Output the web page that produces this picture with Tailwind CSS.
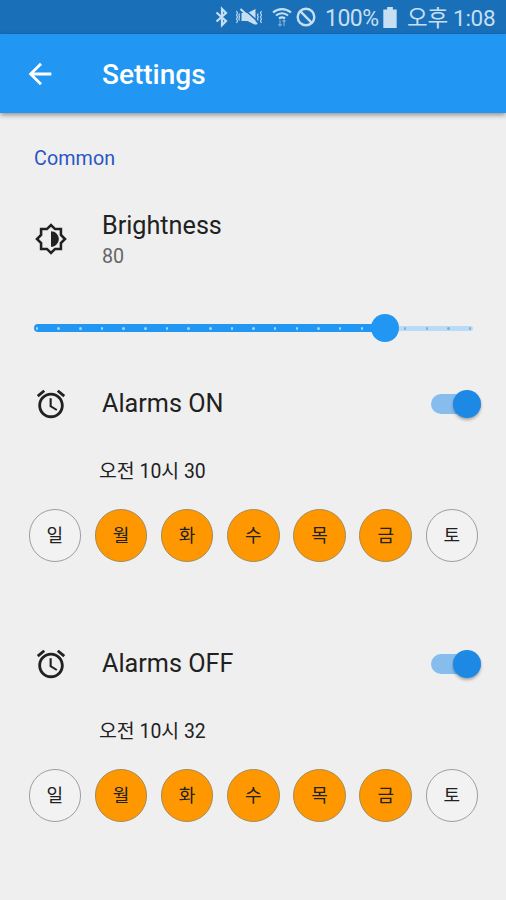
<!DOCTYPE html>
<html lang="ko">
<head>
  <meta charset="UTF-8" />
  <meta name="viewport" content="width=device-width, initial-scale=1.0"/>
  <title>Settings</title>
  <script src="https://cdn.jsdelivr.net/npm/@tailwindcss/browser@4"></script>
</head>
<body class="bg-[#efefef] font-[Roboto,'Noto_Sans_CJK_KR',sans-serif] text-[#212121]">
  <div class="w-[506px] h-[900px] overflow-hidden">
    <!-- status bar -->
    <div class="h-[34px] bg-[#1a6fb9] text-[#c6dff3] flex items-center pl-[214px] whitespace-nowrap">
      <svg class="w-4 h-[22px] shrink-0" viewBox="0 0 16 22" fill="none" stroke="currentColor" stroke-width="2.200"><path d="M2.500 6.500l9.500 8.500-4 4v-16l4 4-9.500 8.500"/></svg>
      <svg class="w-[28px] h-[20px] shrink-0 ml-[5px]" viewBox="0 0 28 20" fill="currentColor">
        <path d="M6.500 6h6L20.500 2v16l-8-4h-6z"/>
        <path d="M7.500 1l16 14" stroke="#1a6fb9" stroke-width="1.500"/>
        <path d="M5.500 2l16.500 15" stroke="currentColor" stroke-width="2"/>
        <path d="M1.500 4l1 2-1 2 1 2-1 2 1 2-1 2M4.500 6.500l-.7 1.700.7 1.800-.7 1.800.7 1.700M26.500 4l-1 2 1 2-1 2 1 2-1 2 1 2M23.200 6.500l-.7 1.700.7 1.800-.7 1.800.7 1.700" fill="none" stroke="currentColor" stroke-width="1.100"/>
      </svg>
      <svg class="w-[20px] h-[20px] shrink-0 ml-[9px]" viewBox="0 0 20 20" fill="none" stroke="currentColor" stroke-width="2.200">
        <path d="M1 5.500c5.500-4.500 12.500-4.500 18 0M4 8.500c3.500-3 8.500-3 12 0M7 11.500c2-1.500 4-1.500 6 0"/>
        <path d="M8 13v6M6.300 17.200L8 19l1.700-1.800M12 19v-6M10.500 14.500L12 13l1.500 1.500" stroke-width="1.200" opacity=".55"/>
      </svg>
      <svg class="w-[20px] h-[20px] shrink-0 ml-1" viewBox="0 0 20 20" fill="none" stroke="currentColor" stroke-width="2.400"><circle cx="10" cy="10" r="8.300"/><path d="M4.200 4.200l11.600 11.600"/></svg>
      <span class="ml-[9px] w-[55px] text-[23px] tracking-[-0.5px] leading-[34px] pt-[3px]">100%</span>
      <svg class="w-[14px] h-[21px] shrink-0 ml-[3px]" viewBox="0 0 14 22" fill="currentColor"><path d="M4 0h6v2.500h4V22H0V2.500h4z"/></svg>
      <span class="ml-[10px] text-[22.500px] leading-[34px] pt-px tracking-[-0.300px]">오후 1:08</span>
    </div>

    <!-- app bar -->
    <header class="relative h-[79px] bg-[#2196f3] text-white flex items-center pl-[23px] shadow-[0_2px_5px_rgba(0,0,0,0.4)]">
      <svg class="w-[34px] h-[34px]" viewBox="0 0 24 24" fill="currentColor"><path d="M20 11H7.830l5.590-5.590L12 4l-8 8 8 8 1.410-1.410L7.830 13H20v-2z"/></svg>
      <h1 class="ml-[45px] pt-[2px] text-[28px] font-medium">Settings</h1>
    </header>

    <main>
      <div class="h-[90px] pl-[34px] pt-[2px] flex items-center text-[19.700px] tracking-[0.100px] text-[#2a56c6]">Common</div>

      <div class="h-[72px] pl-[34px] flex items-center">
        <svg class="w-[34px] h-[34px]" viewBox="0 0 24 24">
          <path d="M19 9.100V5h-4.100L12 2.100 9.100 5H5v4.100L2.100 12 5 14.900V19h4.100l2.900 2.900 2.900-2.900H19v-4.100l2.900-2.900z" fill="none" stroke="#212121" stroke-width="1.800"/>
          <path d="M12 6.500v11c3 0 5.500-2.500 5.500-5.500S15 6.500 12 6.500z" fill="#212121"/>
        </svg>
        <div class="ml-[34px] pt-[2px]">
          <div class="text-[25.200px] leading-[33px]">Brightness</div>
          <div class="text-[19.700px] leading-[29px] text-[#666]">80</div>
        </div>
      </div>

      <div class="relative h-[86px] mx-[34px]">
        <div class="absolute left-0 top-[50.500px] w-[439px] h-[5px] rounded-full bg-[#bbdbf5]"></div>
        <div class="absolute left-0 top-[49px] w-[351px] h-[8px] rounded-full bg-[#2196f3]"></div>
        <div id="ticks"></div>
        <div class="absolute left-[337px] top-[39px] w-[28px] h-[28px] rounded-full bg-[#2196f3]"></div>
      </div>

      <div id="alarms"></div>
    </main>
  </div>

  <script>
    const days = ["일", "월", "화", "수", "목", "금", "토"];
    const alarms = [
      { title: "Alarms ON", time: "오전 10시 30", active: [1, 2, 3, 4, 5] },
      { title: "Alarms OFF", time: "오전 10시 32", active: [1, 2, 3, 4, 5] }
    ];
    const brightness = 80;

    function renderTicks() {
      let html = "";
      for (let i = 0; i <= 20; i++) {
        const color = i * 5 <= brightness ? "bg-[#a6d5fa]" : "bg-[#72b4e8]";
        html += `<div class="absolute top-[52px] w-[2.500px] h-[2.500px] rounded-full ${color}" style="left:${1.8 + i * 21.65}px"></div>`;
      }
      document.getElementById("ticks").innerHTML = html;
    }

    function renderAlarms() {
      document.getElementById("alarms").innerHTML = alarms.map(alarm => `
        <section class="h-[260px]">
          <div class="h-[85px] pl-[34px] pr-[25px] flex items-center">
            <svg class="w-[34px] h-[34px]" viewBox="0 0 24 24" fill="#212121"><path d="M22 5.720l-4.600-3.860-1.290 1.530 4.600 3.860L22 5.720zM7.880 3.390L6.600 1.860 2 5.710l1.290 1.530 4.590-3.850zM12.500 8H11v6l4.750 2.850.75-1.230-4-2.370V8zM12 4c-4.970 0-9 4.030-9 9s4.020 9 9 9c4.970 0 9-4.030 9-9s-4.030-9-9-9zm0 16c-3.870 0-7-3.130-7-7s3.130-7 7-7 7 3.130 7 7-3.130 7-7 7z"/></svg>
            <span class="ml-[34px] pt-px text-[25.200px]">${alarm.title}</span>
            <div class="relative ml-auto w-[50px] h-[20px] rounded-full bg-[#87bdec]">
              <div class="absolute right-0 -top-1 w-[28px] h-[28px] rounded-full bg-[#1e88e5] shadow-[0_2px_3px_rgba(0,0,0,0.3)]"></div>
            </div>
          </div>
          <div class="h-[50px] pl-[99px] pt-px flex items-center text-[19.400px]">${alarm.time}</div>
          <div class="mt-[13px] ml-[28.500px] flex gap-[13.700px]">
            ${days.map((day, i) => `
              <div class="w-[52.500px] h-[53px] shrink-0 rounded-full border flex items-center justify-center text-[18px] ${alarm.active.includes(i) ? "bg-[#ff9800] border-[#a58a55]" : "bg-[#f2f2f2] border-[#9e9e9e]"}">${day}</div>
            `).join("")}
          </div>
        </section>
      `).join("");
    }

    renderTicks();
    renderAlarms();
  </script>
</body>
</html>
